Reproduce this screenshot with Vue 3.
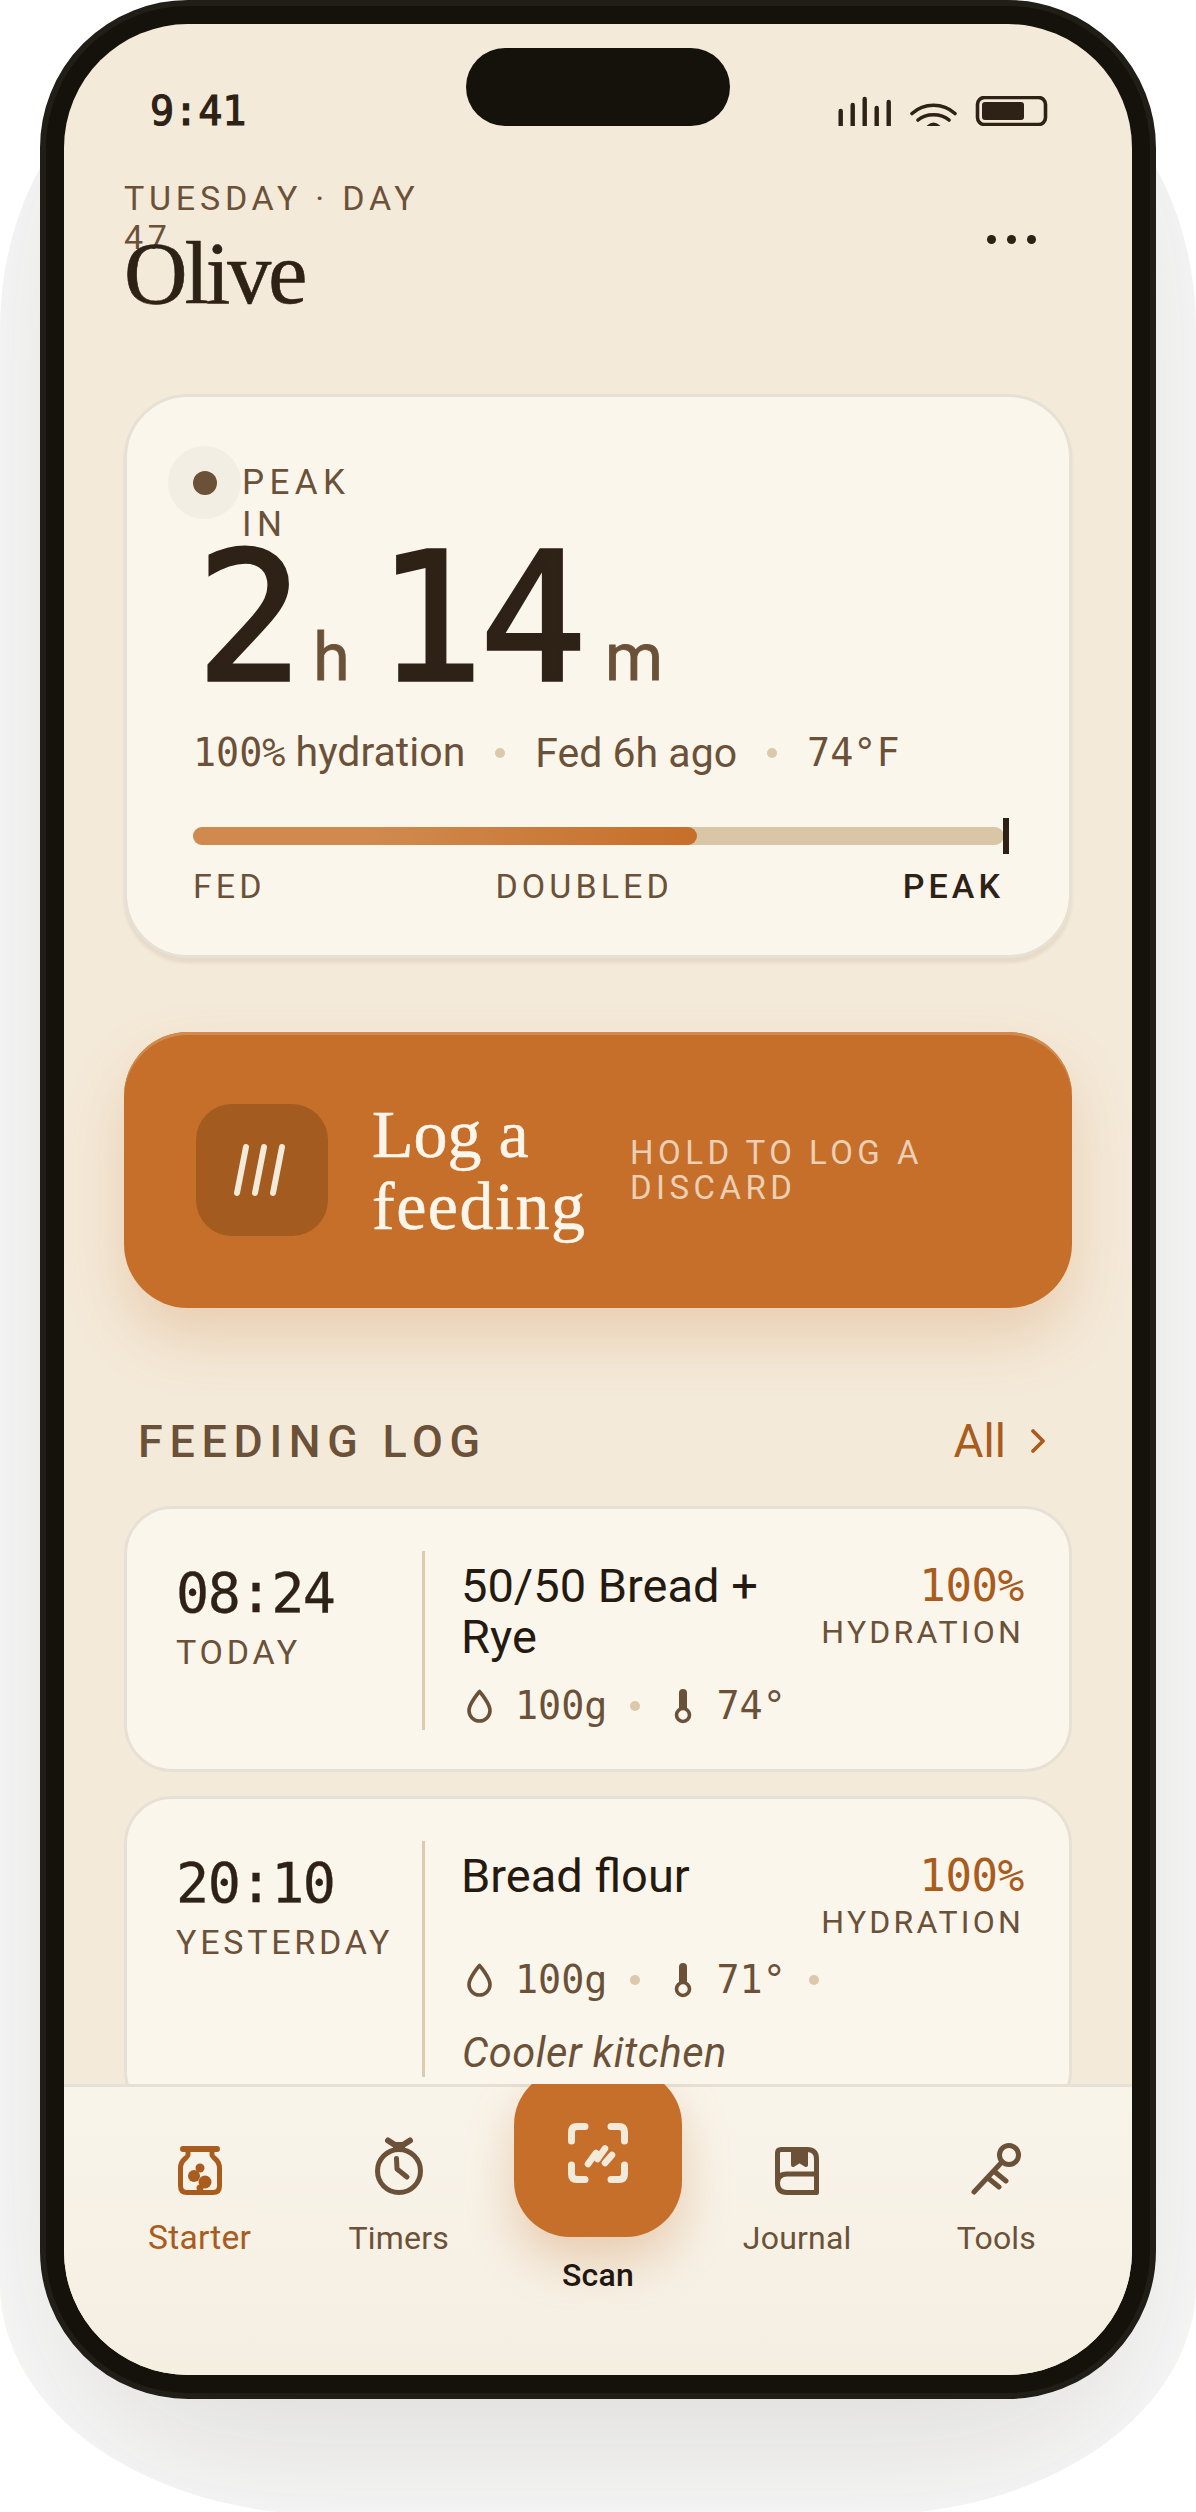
<script setup>
const logs = [
  { time: "08:24", day: "TODAY", title: "50/50 Bread + Rye", temp: "74°" },
  { time: "20:10", day: "YESTERDAY", title: "Bread flour", temp: "71°", note: "Cooler kitchen" }
];
</script>

<template>
  <div class="page">
    <!-- soft shadow with a hard outer edge, sits behind the phone -->
    <div class="shade"><div class="shade-caster"></div></div>

    <div class="phone">
      <div class="screen">
        <div class="island"></div>

        <div class="status">
          <span class="clock">9:41</span>
          <svg class="status-icons" width="210" height="30" viewBox="0 0 210 30">
            <g fill="none" stroke="#2e2115" stroke-width="4.4" stroke-linecap="round">
              <path d="M2.7 15V34M14.7 9V34M26.7 3V34M38.7 12V34M50.7 6V34" />
              <path stroke-width="3.6" d="M74 17.500C86 6.500 105 6.500 117 17.500M80 24C88 17 103 17 111 24M90.500 30.500C94 27.500 97 27.500 100.500 30.500" />
            </g>
            <rect x="139.500" y="1.500" width="68" height="27" rx="7" fill="none" stroke="#2e2115" stroke-width="3.600" />
            <rect x="144" y="6" width="42" height="18" rx="3" fill="#2e2115" />
          </svg>
        </div>

        <div class="content">
          <header class="head">
            <div>
              <div class="eyebrow">TUESDAY · DAY 47</div>
              <h1 class="name">Olive</h1>
            </div>
            <div class="more"><i></i><i></i><i></i></div>
          </header>

          <section class="hero">
            <div class="peak-label">
              <span class="pulse"><span></span></span>
              <span class="peak-text">PEAK IN</span>
            </div>
            <div class="count">
              <span class="big">2</span><span class="unit">h</span>
              <span class="big second">14</span><span class="unit min">m</span>
            </div>
            <div class="facts">
              <span><span class="mono">100%</span> hydration</span>
              <i class="sep"></i>
              <span>Fed 6h ago</span>
              <i class="sep"></i>
              <span class="mono">74°F</span>
            </div>
            <div class="bar">
              <div class="bar-fill"></div>
              <div class="bar-mark"></div>
            </div>
            <div class="bar-labels">
              <span>FED</span>
              <span>DOUBLED</span>
              <span class="now">PEAK</span>
            </div>
          </section>

          <button class="log-btn">
            <span class="log-icon">
              <svg width="60" height="60" viewBox="0 0 60 60" fill="none" stroke="#f4ead9" stroke-width="6" stroke-linecap="round">
                <path d="M5 53L14 7M23 53L32 7M41 53L50 7" />
              </svg>
            </span>
            <span class="log-title">Log a <span class="wide">feeding</span></span>
            <span class="log-sub">HOLD TO LOG A DISCARD</span>
          </button>

          <div class="section-head">
            <h2>FEEDING LOG</h2>
            <a class="all">All
              <svg width="16" height="26" viewBox="0 0 16 26" fill="none" stroke="#a85c1e" stroke-width="3.800" stroke-linecap="round" stroke-linejoin="round">
                <path d="M3 3L13 13L3 23" />
              </svg>
            </a>
          </div>

          <div class="list">
            <article v-for="item in logs" :key="item.time" class="log">
              <div class="when">
                <div class="when-time">{{ item.time }}</div>
                <div class="when-day">{{ item.day }}</div>
              </div>
              <div class="log-main">
                <div class="log-top">
                  <div class="log-name">{{ item.title }}</div>
                  <div class="hyd">
                    <div class="hyd-val">100%</div>
                    <div class="hyd-lab">HYDRATION</div>
                  </div>
                </div>
                <div class="meta">
                  <svg width="25" height="34" viewBox="0 0 25 34" fill="none" stroke="#6b5138" stroke-width="3.600" stroke-linejoin="round">
                    <path d="M12.500 2.500C12.500 2.500 2 14.500 2 21.500A10.500 10.500 0 0 0 23 21.500C23 14.500 12.500 2.500 12.500 2.500Z" />
                  </svg>
                  <span class="mono">100g</span>
                  <i class="sep"></i>
                  <svg width="30" height="36" viewBox="0 0 30 36">
                    <rect x="16" y="1" width="8" height="24" rx="4" fill="#6b5138" />
                    <circle cx="20" cy="27" r="6.500" fill="#fbf6ec" stroke="#6b5138" stroke-width="3.600" />
                  </svg>
                  <span class="mono">{{ item.temp }}</span>
                  <template v-if="item.note">
                    <i class="sep"></i>
                    <em class="note">{{ item.note }}</em>
                  </template>
                </div>
              </div>
            </article>
          </div>
        </div>

        <nav class="nav">
          <div class="tab active">
            <svg width="44" height="49" viewBox="0 0 44 49" fill="none" stroke="#a85c1e" stroke-width="5" stroke-linecap="round">
              <path d="M5 3H39" stroke-width="6" />
              <path d="M10 6V9C10 12 2.500 13 2.500 22V40Q2.500 46.500 9 46.500H35Q41.500 46.500 41.500 40V22C41.500 13 34 12 34 9V6" />
              <g fill="#a85c1e" stroke="none">
                <circle cx="22" cy="22" r="4.500" />
                <circle cx="16" cy="30" r="6" />
                <circle cx="27" cy="36" r="6.500" />
                <circle cx="22" cy="42" r="3.500" />
              </g>
            </svg>
            <span>Starter</span>
          </div>
          <div class="tab">
            <svg width="48" height="58" viewBox="0 0 48 58" fill="none" stroke="#6b5138" stroke-width="5" stroke-linecap="round" stroke-linejoin="round">
              <circle cx="24" cy="34" r="21.500" />
              <path d="M13 3.500L20 8H28L35 3.500" stroke-width="6" />
              <path d="M19 8H29V13H19Z" fill="#6b5138" stroke-width="2" />
              <path d="M21.500 21.500L22 32L32 40" />
            </svg>
            <span>Timers</span>
          </div>
          <div class="tab scan">
            <div class="scan-btn">
              <svg width="60" height="60" viewBox="0 0 60 60" fill="none" stroke="#f4ead9" stroke-width="7" stroke-linecap="round">
                <path d="M3.500 18V9Q3.500 3.500 9 3.500H17M43 3.500H51Q56.500 3.500 56.500 9V18M3.500 42V51Q3.500 56.500 9 56.500H17M43 56.500H51Q56.500 56.500 56.500 51V42" />
                <path stroke-width="6.500" d="M20 41L28 30M29.500 36L37 25.500M37 40L44 32" />
              </svg>
            </div>
            <span>Scan</span>
          </div>
          <div class="tab">
            <svg width="44" height="48" viewBox="0 0 44 48" fill="none" stroke="#6b5138" stroke-width="5" stroke-linejoin="round">
              <path d="M6 2.500H32Q41.500 2.500 41.500 12V45.500H12Q2.500 45.500 2.500 36V6Q2.500 2.500 6 2.500Z" />
              <path d="M2.500 36Q2.500 27 12 27H41.500" />
              <path d="M18 4V18L24.500 14L31 18V4" stroke-width="4" fill="#6b5138" />
            </svg>
            <span>Journal</span>
          </div>
          <div class="tab">
            <svg width="50" height="52" viewBox="0 0 50 52" fill="none" stroke="#6b5138" stroke-width="5" stroke-linecap="round">
              <circle cx="38" cy="12" r="9.500" />
              <path d="M31 19L3 49M24 29L35 38M17 35L28 44" />
            </svg>
            <span>Tools</span>
          </div>
        </nav>
      </div>
    </div>
  </div>
</template>

<style>
html, body {
  background: #fff;
}
</style>

<style scoped>
.page {
  position: relative;
  width: 1196px;
  height: 2512px;
  overflow: hidden;
  background: #fff;
  font-family: Roboto, sans-serif;
  color: #2e2115;
}

.shade {
  position: absolute;
  left: 0;
  top: 60px;
  width: 1196px;
  height: 2455px;
  overflow: hidden;
  border-radius: 200px 200px 330px 330px / 270px 270px 230px 230px;
}

.shade-caster {
  position: absolute;
  left: 40px;
  top: -60px;
  width: 1116px;
  height: 2399px;
  border-radius: 148px;
  box-shadow: 0 70px 200px rgba(40, 30, 20, 0.16);
}

.phone {
  position: relative;
  width: 1116px;
  height: 2399px;
  margin-left: 40px;
  box-sizing: border-box;
  padding: 18px;
  border: 6px solid #211d17;
  border-radius: 148px;
  background: #15120c;
}

.screen {
  position: relative;
  height: 100%;
  overflow: hidden;
  border-radius: 124px;
  background: #f4ead9;
}

.island {
  position: absolute;
  top: 24px;
  left: 402px;
  width: 264px;
  height: 78px;
  border-radius: 39px;
  background: #15120c;
}

.status {
  height: 102px;
  display: flex;
  justify-content: space-between;
  align-items: flex-end;
  padding: 0 84px 0 86px;
  box-sizing: border-box;
}

.clock {
  font-family: "DejaVu Sans Mono", monospace;
  font-size: 40px;
  line-height: 40px;
  margin-bottom: -5px;
  -webkit-text-stroke: 1.2px #2e2115;
}

.status-icons {
  display: block;
  overflow: hidden;
}

.content {
  padding: 53px 60px 0 60px;
}

.head {
  display: flex;
  justify-content: space-between;
  align-items: flex-start;
  height: 139px;
}

.eyebrow {
  width: 320px;
  height: 51px;
  font-size: 34px;
  line-height: 39px;
  letter-spacing: 0.14em;
  color: #6b5138;
}

.name {
  margin: 0;
  font-family: "Liberation Serif", serif;
  font-weight: 400;
  font-size: 88px;
  line-height: 88px;
  letter-spacing: -0.035em;
  -webkit-text-stroke: 0.6px #2e2115;
}

.more {
  display: flex;
  gap: 11px;
  margin: 56px 36px 0 0;
}

.more i {
  width: 9px;
  height: 9px;
  border-radius: 50%;
  background: #2e2115;
}

.hero {
  position: relative;
  margin-top: 76px;
  height: 564px;
  box-sizing: border-box;
  padding: 52px 65px 0 66px;
  border: 3px solid #e7e0d4;
  border-radius: 64px;
  background: #fbf6ec;
  box-shadow: 0 5px 3px rgba(120, 90, 50, 0.1);
}

.peak-label {
  display: flex;
  height: 92px;
}

.pulse {
  position: absolute;
  left: 41px;
  top: 49px;
  width: 73px;
  height: 73px;
  border-radius: 50%;
  background: #f3eee3;
  display: flex;
  align-items: center;
  justify-content: center;
}

.pulse span {
  width: 24px;
  height: 24px;
  border-radius: 50%;
  background: #6b5138;
}

.peak-text {
  margin: 13px 0 0 49px;
  width: 124px;
  font-size: 35px;
  line-height: 42px;
  letter-spacing: 0.155em;
  color: #6b5138;
}

.count {
  display: flex;
  align-items: baseline;
  height: 164px;
  margin-top: -4px;
  padding-left: 3px;
}

.big {
  font-family: "DejaVu Sans Mono", monospace;
  font-size: 178px;
  line-height: 164px;
  letter-spacing: -4px;
  -webkit-text-stroke: 3.5px #2e2115;
}

.second {
  margin-left: 27px;
}

.unit {
  font-family: Roboto, sans-serif;
  font-size: 66px;
  color: #6b5138;
  margin-left: 14px;
  -webkit-text-stroke: 0.8px #6b5138;
}

.unit.min {
  margin-left: 22px;
}

.facts {
  display: flex;
  align-items: center;
  gap: 30px;
  margin-top: 26px;
  font-size: 41px;
  line-height: 50px;
  color: #6b5138;
}

.mono {
  font-family: "DejaVu Sans Mono", monospace;
  font-size: 38.400px;
}

.sep {
  width: 10px;
  height: 10px;
  border-radius: 50%;
  background: #dcc9ab;
  flex-shrink: 0;
}

.bar {
  position: relative;
  height: 18px;
  margin-top: 49px;
  border-radius: 9px;
  background: #d9c6a6;
}

.bar-fill {
  width: 504px;
  height: 100%;
  border-radius: 9px;
  background: linear-gradient(90deg, #d08a4e 0%, #d08a4e 35%, #c66f2a 100%);
}

.bar-mark {
  position: absolute;
  right: -5px;
  top: -9px;
  width: 6px;
  height: 36px;
  background: #2e2115;
}

.bar-labels {
  display: flex;
  justify-content: space-between;
  margin-top: 21px;
  font-size: 34px;
  line-height: 40px;
  letter-spacing: 0.12em;
  color: #6b5138;
}

.now {
  color: #2e2115;
  font-weight: 500;
}

.log-btn {
  display: flex;
  align-items: center;
  width: 100%;
  height: 276px;
  margin-top: 74px;
  padding: 0 0 0 72px;
  box-sizing: border-box;
  border: none;
  border-radius: 64px;
  background: #c66f2a;
  box-shadow: inset 0 3px 0 #d28a4f, 0 30px 60px rgba(198, 111, 42, 0.22);
  text-align: left;
  font-family: inherit;
}

.log-icon {
  width: 132px;
  height: 132px;
  border-radius: 36px;
  background: #a35b1f;
  display: flex;
  align-items: center;
  justify-content: center;
  flex-shrink: 0;
}

.log-title {
  width: 216px;
  margin-left: 44px;
  font-family: "Liberation Serif", serif;
  font-size: 68px;
  line-height: 72px;
  color: #fbf6ec;
  -webkit-text-stroke: 0.5px #fbf6ec;
}

.wide {
  letter-spacing: 1.500px;
}

.log-sub {
  width: 320px;
  margin-left: 42px;
  font-size: 33px;
  line-height: 35px;
  letter-spacing: 0.135em;
  color: rgba(251, 246, 236, 0.72);
}

.section-head {
  display: flex;
  justify-content: space-between;
  align-items: center;
  margin-top: 109px;
  padding: 0 26px 0 14px;
  height: 48px;
}

.section-head h2 {
  margin: 0;
  font-size: 44.800px;
  font-weight: 500;
  letter-spacing: 0.15em;
  color: #6b5138;
}

.all {
  display: flex;
  align-items: center;
  gap: 24px;
  font-size: 46px;
  color: #a85c1e;
}

.list {
  margin-top: 41px;
  display: flex;
  flex-direction: column;
  gap: 24px;
}

.log {
  display: flex;
  box-sizing: border-box;
  padding: 42px 45px 39px 49px;
  border: 3px solid #e7e0d4;
  border-radius: 48px;
  background: #fbf6ec;
}

.when {
  width: 246px;
  flex-shrink: 0;
  padding-top: 10px;
}

.when-time {
  font-family: "DejaVu Sans Mono", monospace;
  font-size: 55px;
  line-height: 64px;
  letter-spacing: -1.400px;
  -webkit-text-stroke: 0.3px #2e2115;
}

.when-day {
  margin-top: 7px;
  font-size: 34px;
  line-height: 40px;
  letter-spacing: 0.11em;
  color: #6b5138;
}

.log-main {
  flex: 1;
  border-left: 3px solid #dccbb0;
  padding-left: 36px;
  min-width: 0;
}

.log-top {
  display: flex;
  justify-content: space-between;
  gap: 24px;
  padding-top: 9px;
}

.log-name {
  font-size: 47px;
  line-height: 51px;
  color: #241a10;
}

.hyd {
  flex-shrink: 0;
  text-align: right;
}

.hyd-val {
  font-family: "DejaVu Sans Mono", monospace;
  font-size: 44px;
  line-height: 51px;
  letter-spacing: -0.300px;
  color: #a85c1e;
}

.hyd-lab {
  margin-top: 8px;
  font-size: 32px;
  line-height: 27px;
  letter-spacing: 0.1em;
  color: #6b5138;
}

.meta {
  display: flex;
  flex-wrap: wrap;
  align-items: center;
  column-gap: 23px;
  row-gap: 25px;
  margin-top: 20px;
  padding-left: 6px;
  line-height: 48px;
  color: #6b5138;
}

.note {
  width: 100%;
  margin-left: -5px;
  font-size: 41.600px;
  letter-spacing: 0.5px;
  font-style: italic;
}

.nav {
  position: absolute;
  left: 0;
  right: 0;
  bottom: 0;
  height: 291px;
  overflow: hidden;
  padding: 0 36px;
  display: grid;
  grid-template-columns: repeat(5, 1fr);
  background: linear-gradient(#f9f4ea, #f5efe2);
  box-shadow: inset 0 3px 0 #e7e0d4;
}

.tab {
  display: flex;
  flex-direction: column;
  align-items: center;
  height: 172px;
  justify-content: flex-end;
  gap: 25px;
  font-size: 32px;
  line-height: 36px;
  letter-spacing: 0.2px;
  color: #6b5138;
}

.tab.active {
  color: #a85c1e;
  font-size: 33.600px;
}

.scan {
  justify-content: flex-start;
  height: auto;
  gap: 20px;
  color: #1f1710;
  font-size: 32px;
  font-weight: 500;
}

.scan-btn {
  width: 168px;
  height: 168px;
  margin-top: -15px;
  flex-shrink: 0;
  border-radius: 56px;
  background: #c66f2a;
  box-shadow: 0 24px 48px rgba(198, 111, 42, 0.28);
  display: flex;
  align-items: center;
  justify-content: center;
}
</style>
